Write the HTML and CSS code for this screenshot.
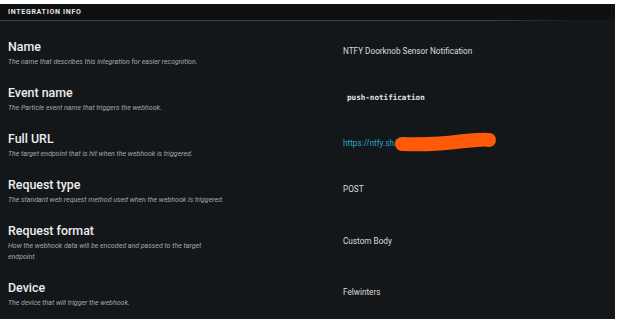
FILE: index.html
```html
<!DOCTYPE html>
<html lang="en">
<head>
    <meta charset="UTF-8">
    <meta name="viewport" content="width=device-width, initial-scale=1.0">
    <title>Integration info</title>
    <link rel="stylesheet" href="styles.css">
</head>
<body>
    <div class="panel">
        <div class="panel-head">INTEGRATION INFO</div>
        <ul class="info-list">
            <li class="info-row">
                <div class="info-label">
                    <h3>Name</h3>
                    <p>The name that describes this integration for easier recognition.</p>
                </div>
                <div class="info-value">NTFY Doorknob Sensor Notification</div>
            </li>
            <li class="info-row">
                <div class="info-label">
                    <h3>Event name</h3>
                    <p>The Particle event name that triggers the webhook.</p>
                </div>
                <div class="info-value"><code>push-notification</code></div>
            </li>
            <li class="info-row">
                <div class="info-label">
                    <h3>Full URL</h3>
                    <p>The target endpoint that is hit when the webhook is triggered.</p>
                </div>
                <div class="info-value">
                    <a href="javascript:;" class="url">https://ntfy.sh/</a><svg class="scribble" width="104" height="22" viewBox="0 0 104 22"><path d="M8 13 C 30 14, 55 12, 70 10 C 82 9, 92 8, 95 9" stroke="#ff5a0a" stroke-width="14" stroke-linecap="round" fill="none"/></svg>
                </div>
            </li>
            <li class="info-row">
                <div class="info-label">
                    <h3>Request type</h3>
                    <p>The standard web request method used when the webhook is triggered.</p>
                </div>
                <div class="info-value">POST</div>
            </li>
            <li class="info-row">
                <div class="info-label">
                    <h3>Request format</h3>
                    <p>How the webhook data will be encoded and passed to the target endpoint.</p>
                </div>
                <div class="info-value">Custom Body</div>
            </li>
            <li class="info-row">
                <div class="info-label">
                    <h3>Device</h3>
                    <p>The device that will trigger the webhook.</p>
                </div>
                <div class="info-value">Felwinters</div>
            </li>
        </ul>
    </div>
</body>
</html>
```

FILE: styles.css
```css
* {
    margin: 0;
    padding: 0;
    box-sizing: border-box;
}
body {
    background: #fff;
    font-family: Roboto, "Liberation Sans", sans-serif;
}
.panel {
    width: 615px;
    height: 315px;
    margin-top: 4px;
    background: #141719;
    overflow: hidden;
}
.panel-head {
    height: 16px;
    padding-left: 8px;
    background: #0e1012;
    color: #e6e6e6;
    font-size: 7px;
    font-weight: 700;
    letter-spacing: .7px;
    line-height: 16px;
    position: relative;
}
.panel-head::after {
    content: "";
    position: absolute;
    left: 0;
    bottom: -1px;
    width: 580px;
    height: 1px;
    background: linear-gradient(to right, #3c4043 0%, #3c4043 85%, rgba(60, 64, 67, 0) 100%);
}
.info-list {
    list-style: none;
    padding-top: 10px;
}
.info-row {
    display: flex;
    align-items: center;
    padding: 8.5px 0;
}
.info-label {
    width: 343px;
    padding-left: 8px;
}
.info-label h3 {
    color: #ececec;
    font-size: 12.4px;
    font-weight: 500;
    line-height: 15px;
}
.info-label p {
    width: 219px;
    margin-top: 3px;
    color: #a4a6a8;
    font-size: 7px;
    font-style: italic;
    line-height: 11px;
}
.info-value {
    display: flex;
    align-items: center;
    padding-bottom: 4px;
    color: #dcdcdc;
    font-size: 8.2px;
}
.info-value code {
    padding: 1px 4px;
    color: #e4e4e4;
    font-family: "DejaVu Sans Mono", "Liberation Mono", monospace;
    font-size: 7.6px;
    font-weight: 700;
}
.url {
    color: #23a6c8;
    text-decoration: none;
}
.scribble {
    margin-left: -3px;
    margin-top: -3px;
}
```
